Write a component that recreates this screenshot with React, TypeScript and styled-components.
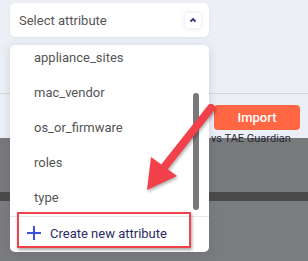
import React from "react";
import styled, { createGlobalStyle } from "styled-components";

const GlobalStyle = createGlobalStyle`
  html, body {
    margin: 0;
    padding: 0;
    background: #eceff5;
  }
  body {
    font-family: Roboto, "Liberation Sans", Arial, sans-serif;
  }
`;

const Page = styled.div`
  position: relative;
  width: 308px;
  height: 261px;
  overflow: hidden;
  display: flex;
  flex-direction: column;
`;

const HeaderBand = styled.div`
  height: 96px;
  background: #eceff5;
  border-bottom: 1px solid #d4d6db;
`;

const ActionBand = styled.div`
  height: 45px;
  background: #eceff5;
  display: flex;
  justify-content: flex-end;
  align-items: flex-start;
  padding: 11px 8px 0 0;
  box-sizing: border-box;
`;

const ImportButton = styled.button`
  width: 86px;
  height: 25px;
  border: none;
  border-radius: 4px;
  background: #ff6644;
  color: #fff;
  font-family: Roboto, "Liberation Sans", Arial, sans-serif;
  font-size: 13px;
  font-weight: 500;
  padding: 0;
`;

const ShadeBand = styled.div<{ $h: number; $bg: string }>`
  height: ${(p) => p.$h}px;
  background: ${(p) => p.$bg};
  flex-shrink: 0;
`;

const PageText = styled.div`
  margin-top: -5px;
  padding-left: 211px;
  font-size: 11px;
  line-height: 11px;
  color: #2a2a36;
  white-space: nowrap;
`;

const Picker = styled.div`
  position: absolute;
  left: 10px;
  top: 3px;
  width: 199px;
`;

const SelectBox = styled.div`
  height: 34px;
  background: #fff;
  border-radius: 5px;
  display: flex;
  align-items: center;
  justify-content: space-between;
  padding: 0 8px 0 9px;
  box-sizing: border-box;
  font-size: 13px;
  color: #555;
  box-shadow: 0 1px 3px rgba(120, 130, 160, 0.12);
`;

const ChevronBtn = styled.span`
  width: 16px;
  height: 15px;
  border-radius: 3px;
  background: #fff;
  box-shadow: 0 0 4px rgba(120, 130, 170, 0.25);
  display: flex;
  align-items: center;
  justify-content: center;
`;

const Menu = styled.div`
  position: relative;
  margin-top: 8px;
  background: #fff;
  border-radius: 5px;
  box-shadow: 0 2px 10px rgba(60, 70, 100, 0.18);
  overflow: hidden;
`;

const List = styled.div`
  height: 171px;
  overflow: hidden;
`;

const ListInner = styled.div`
  margin-top: -5px;
`;

const Item = styled.div`
  height: 35px;
  display: flex;
  align-items: center;
  padding-left: 24px;
  font-size: 13px;
  color: #555;
`;

const Thumb = styled.div`
  position: absolute;
  left: 183px;
  top: 48px;
  width: 6px;
  height: 117px;
  border-radius: 3px;
  background: #797979;
`;

const Divider = styled.div`
  height: 1px;
  background: #e6e7ea;
`;

const Footer = styled.div`
  height: 35px;
  display: flex;
  align-items: center;
  padding: 0 0 3px 17px;
  box-sizing: border-box;
`;

const CreateButton = styled.button`
  display: flex;
  align-items: center;
  gap: 9px;
  border: none;
  background: none;
  padding: 0;
  font-family: Roboto, "Liberation Sans", Arial, sans-serif;
  font-size: 13px;
  color: #2b2b62;
`;

const Highlight = styled.div`
  position: absolute;
  left: 17px;
  top: 212px;
  width: 174px;
  height: 36px;
  box-sizing: border-box;
  border: 2.5px solid #f0424a;
  box-shadow: 1px 2px 3px rgba(0, 0, 0, 0.35);
  pointer-events: none;
`;

const Annotation = styled.svg`
  position: absolute;
  left: 0;
  top: 0;
  pointer-events: none;
  filter: drop-shadow(1px 2px 1.5px rgba(0, 0, 0, 0.3));
`;

const attributes = ["appliance_sites", "mac_vendor", "os_or_firmware", "roles", "type"];

export default function App() {
  return (
    <>
      <GlobalStyle />
      <Page>
        <HeaderBand />
        <ActionBand>
          <ImportButton>Import</ImportButton>
        </ActionBand>
        <ShadeBand $h={54} $bg="#78797b">
          <PageText>vs TAE Guardian</PageText>
        </ShadeBand>
        <ShadeBand $h={9} $bg="#4a4a4b" />
        <ShadeBand $h={60} $bg="#7b7c7e" />

        <Picker>
          <SelectBox>
            Select attribute
            <ChevronBtn>
              <svg width="8" height="6" viewBox="0 0 8 6">
                <path d="M1.5 4.5 L4 2 L6.5 4.5" fill="none" stroke="#34347a" strokeWidth="1.8" />
              </svg>
            </ChevronBtn>
          </SelectBox>
          <Menu>
            <List>
              <ListInner>
                {attributes.map((a) => (
                  <Item key={a}>{a}</Item>
                ))}
              </ListInner>
            </List>
            <Thumb />
            <Divider />
            <Footer>
              <CreateButton>
                <svg width="14" height="14" viewBox="0 0 14 14">
                  <path d="M7 0 V14 M0 7 H14" stroke="#3d4fe0" strokeWidth="2" />
                </svg>
                Create new attribute
              </CreateButton>
            </Footer>
          </Menu>
        </Picker>

        <Highlight />
        <Annotation width="308" height="261" viewBox="0 0 308 261">
          <line x1="211" y1="108" x2="162" y2="170" stroke="#f2414b" strokeWidth="8" strokeLinecap="round" />
          <polygon points="147,190 151,157 177,176" fill="#f2414b" />
        </Annotation>
      </Page>
    </>
  );
}
